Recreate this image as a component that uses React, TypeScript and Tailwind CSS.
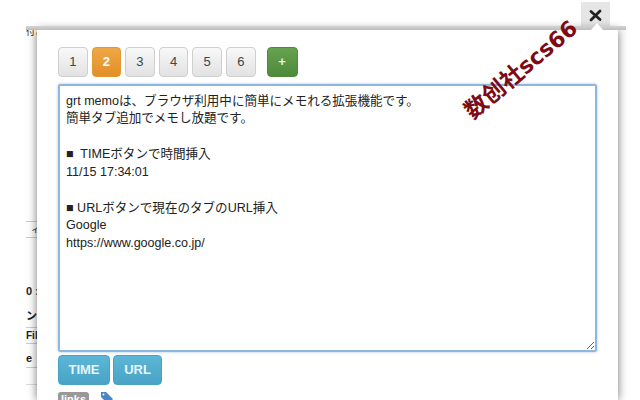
const memo = `grt memoは、ブラウザ利用中に簡単にメモれる拡張機能です。
簡単タブ追加でメモし放題です。

■  TIMEボタンで時間挿入
11/15 17:34:01

■ URLボタンで現在のタブのURL挿入
Google
https://www.google.co.jp/`;

const font = "font-['Liberation_Sans','Noto_Sans_CJK_JP',sans-serif]";

function TabButton({ label, active }: { label: string; active?: boolean }) {
  return (
    <button
      className={`h-[30px] w-[29.6px] rounded-[4px] border text-[13px] ${
        active
          ? "border-[#e0992f] bg-gradient-to-b from-[#efa845] to-[#e28f26] font-bold text-white"
          : "border-[#cfcfcf] bg-gradient-to-b from-[#f8f8f8] to-[#e2e2e2] text-[#444]"
      }`}
    >
      {label}
    </button>
  );
}

function ActionButton({ label, width }: { label: string; width: string }) {
  return (
    <button className={`${width} h-[30px] rounded-[4px] border border-[#46a3c4] bg-gradient-to-b from-[#5db6d6] to-[#48a3c6] text-[13px] font-bold text-[#e8f5fa]`}>
      {label}
    </button>
  );
}

function PageEdge() {
  return (
    <div className="w-[11px] shrink-0 overflow-hidden text-[11px] leading-[14px] text-[#222]">
      <div className="h-[5px] text-[9px] leading-[5px] whitespace-nowrap">付こ</div>
      <div className="mt-[186px] h-[17px] border-y border-[#ccc] text-[9px] leading-[15px] whitespace-nowrap">&nbsp;&nbsp;ィ</div>
      <div className="mt-[46px] h-[14px] font-bold whitespace-nowrap">0 :</div>
      <div className="mt-[11px] h-[14px] font-bold whitespace-nowrap">ン</div>
      <div className="mt-[4px] h-[17px] border-y border-[#ccc] text-[10px] leading-[15px] font-bold whitespace-nowrap">Fil</div>
      <div className="mt-[7px] h-[17px] border-b border-[#ccc] font-bold whitespace-nowrap">e</div>
      <div className="h-[17px] border-b border-[#ddd]" />
    </div>
  );
}

export default function App() {
  return (
    <div className={`${font} relative h-[400px] w-[640px] overflow-hidden bg-white`}>
      {/* close tab */}
      <div className="flex h-[26px] justify-end pt-[2px] pr-[30px]">
        <button className="flex h-[26px] w-[29px] items-center justify-center bg-[#e6e6e6]">
          <svg width="13" height="13" viewBox="0 0 13 13">
            <path d="M2 2.5 11 10.5M11 2 2 11" stroke="#222" strokeWidth="2.8" strokeLinecap="round" />
          </svg>
        </button>
      </div>
      <div className="relative ml-[26px] h-[4px] w-[600px] bg-gradient-to-b from-[#d4d4d4] to-[#bdbdbd]">
        <div className="absolute -top-[3px] left-[565px] h-0 w-0 border-x-[6px] border-b-[7px] border-x-transparent border-b-white" />
      </div>

      <div className="ml-[26px] flex">
        <PageEdge />
        <div className="h-[370px] w-[581px] overflow-hidden bg-white px-[21px] pt-[17px] shadow-[0_0_9px_rgba(0,0,0,0.55)]">
          <div className="flex gap-[4px]">
            <TabButton label="1" />
            <TabButton label="2" active />
            <TabButton label="3" />
            <TabButton label="4" />
            <TabButton label="5" />
            <TabButton label="6" />
            <button className="ml-[7px] h-[30px] w-[31px] rounded-[4px] border border-[#4f8a3c] bg-gradient-to-b from-[#66a24f] to-[#4d8a3a] text-[13px] font-bold text-[#e6f2e0]">
              +
            </button>
          </div>
          <textarea
            readOnly
            defaultValue={memo}
            className="mt-[7px] block h-[268px] w-[539px] rounded-[2px] border-2 border-[#8fb7dc] px-[6px] pt-[6.5px] pb-[6px] text-[12.55px] leading-[17.85px] text-[#222] shadow-[0_0_3px_rgba(110,160,210,0.6)] outline-none"
          />
          <div className="mt-[3px] flex gap-[3px]">
            <ActionButton label="TIME" width="w-[52px]" />
            <ActionButton label="URL" width="w-[49px]" />
          </div>
          <div className="mt-[7px] flex items-start gap-[11px]">
            <span className="h-[16px] w-[31px] rounded-[3px] bg-[#999] text-center text-[11px] leading-[15px] font-bold text-white">links</span>
            <svg width="14" height="14" viewBox="0 0 14 14" className="-mt-[1px]">
              <path d="M1 1h5l7 7-5 5-7-7z" fill="#4a86c5" />
              <circle cx="3.5" cy="3.5" r="1" fill="#fff" />
            </svg>
          </div>
        </div>
      </div>

      {/* watermark */}
      <div className="absolute top-[55px] left-[452px] w-[136px] -rotate-[40deg] text-center text-[23px] leading-[30px] font-bold whitespace-nowrap text-[#7d0a14]">
        数创社<span className="font-['DejaVu_Sans',sans-serif] text-[22px]">scs66</span>
      </div>
    </div>
  );
}
